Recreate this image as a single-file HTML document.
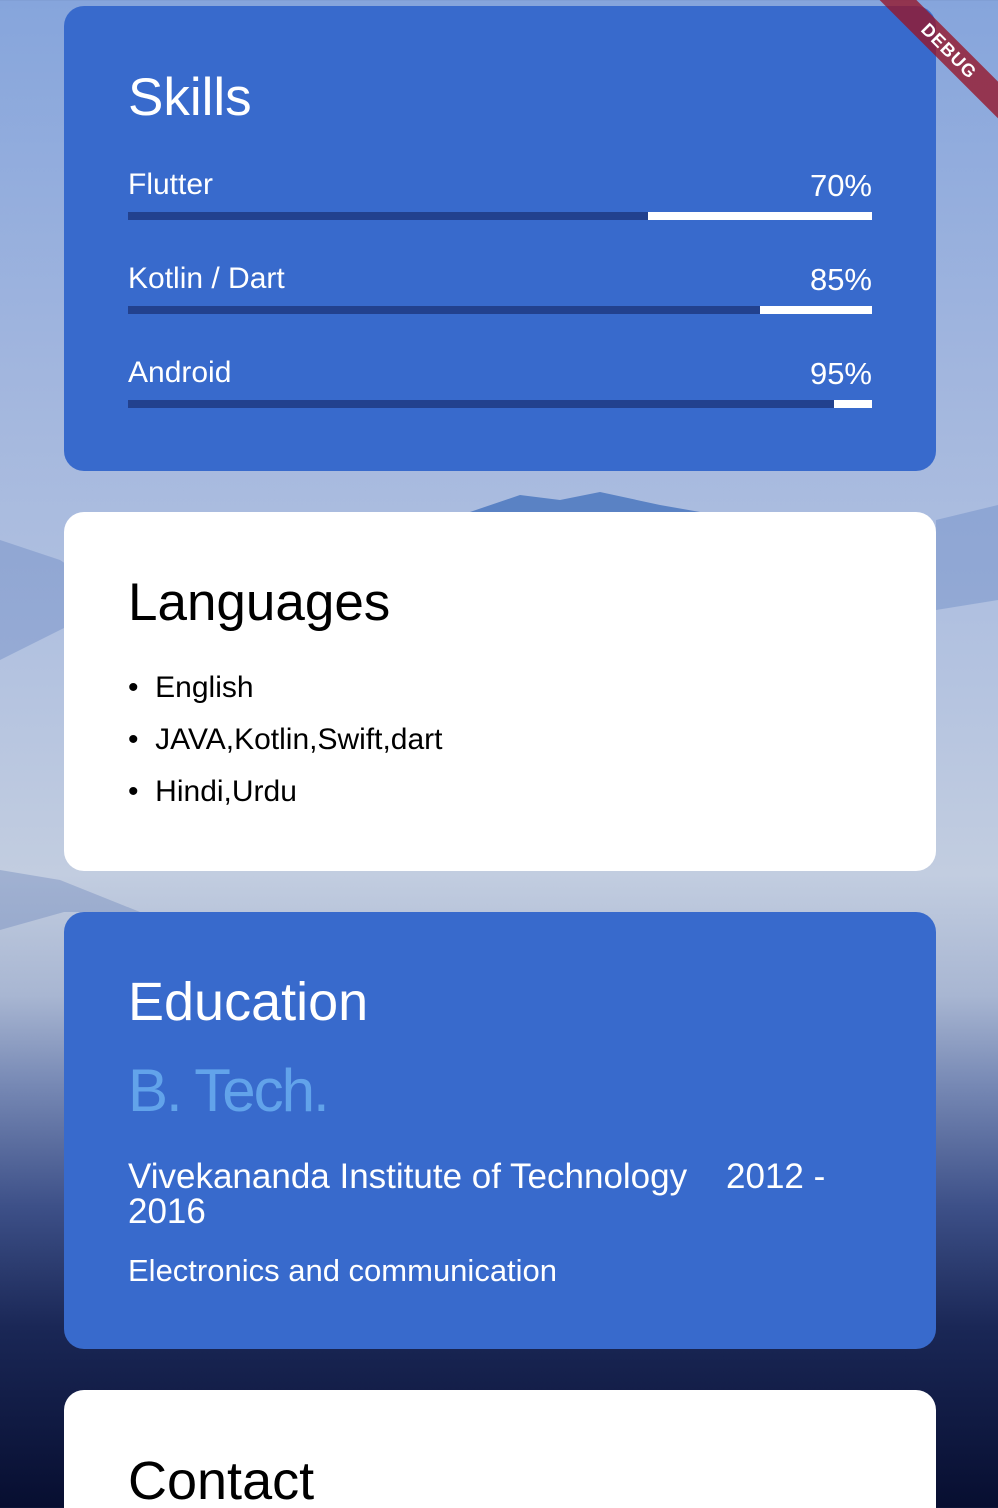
<!DOCTYPE html>
<html><head><meta charset="utf-8"><style>
*{margin:0;padding:0;box-sizing:border-box}
html,body{width:998px;height:1508px;overflow:hidden}
body{font-family:"Liberation Sans",sans-serif;position:relative;
background:linear-gradient(180deg,#86a5dc 0%,#a2b6de 25%,#b4c3e0 45%,#c2cde0 58%,#a8b6d2 66%,#7688b4 72%,#3d5088 80%,#1a2756 88%,#070e30 100%);}
.card{position:absolute;left:64px;width:872px;border-radius:20px}
.blue{background:#386acc;color:#fff}
.white{background:#fff;color:#000}
.abs{position:absolute;white-space:nowrap}
.bar{position:absolute;left:64px;width:744px;height:8px;background:#22418e}
.bar i{position:absolute;right:0;top:0;height:8px;background:#fff}
</style></head><body>
<svg style="position:absolute;left:0;top:0" width="998" height="1508">
<path d="M0 540 L60 560 L120 600 L0 660Z" fill="#5f7fbe" opacity=".35"/>
<path d="M470 512 L520 495 L560 500 L600 492 L660 505 L700 512Z" fill="#5a82c4"/>
<path d="M936 520 L998 505 L998 600 L936 610Z" fill="#5b7fbf" opacity=".35"/>
<path d="M0 870 L60 880 L110 900 L140 912 L64 912 L0 930Z" fill="#6d86bb" opacity=".4"/>
</svg>

<div class="card blue" style="top:6px;height:465px">
 <div class="abs" style="left:64px;top:61px;font-size:53px">Skills</div>
 <div class="abs" style="left:64px;top:162px;font-size:30px">Flutter</div>
 <div class="abs" style="right:64px;top:162px;font-size:31px">70%</div>
 <div class="bar" style="top:206px"><i style="width:224px"></i></div>
 <div class="abs" style="left:64px;top:256px;font-size:30px">Kotlin / Dart</div>
 <div class="abs" style="right:64px;top:256px;font-size:31px">85%</div>
 <div class="bar" style="top:300px"><i style="width:112px"></i></div>
 <div class="abs" style="left:64px;top:350px;font-size:30px">Android</div>
 <div class="abs" style="right:64px;top:350px;font-size:31px">95%</div>
 <div class="bar" style="top:394px"><i style="width:38px"></i></div>
</div>

<div class="card white" style="top:512px;height:359px">
 <div class="abs" style="left:64px;top:60px;font-size:53px">Languages</div>
 <div class="abs" style="left:64px;top:159px;font-size:30px">•&nbsp; English</div>
 <div class="abs" style="left:64px;top:211px;font-size:30px">•&nbsp; JAVA,Kotlin,Swift,dart</div>
 <div class="abs" style="left:64px;top:263px;font-size:30px">•&nbsp; Hindi,Urdu</div>
</div>

<div class="card blue" style="top:912px;height:437px">
 <div class="abs" style="left:64px;top:59px;font-size:54px">Education</div>
 <div class="abs" style="left:64px;top:144px;font-size:60px;color:#62a3ea;letter-spacing:-2px">B. Tech.</div>
 <div class="abs" style="left:64px;top:247px;font-size:35px;line-height:35px;white-space:normal;width:760px">Vivekananda Institute of Technology&nbsp;&nbsp;&nbsp; 2012 - 2016</div>
 <div class="abs" style="left:64px;top:341px;font-size:31px">Electronics and communication</div>
</div>

<div class="card white" style="top:1390px;height:140px">
 <div class="abs" style="left:64px;top:60px;font-size:54px">Contact</div>
</div>

<div style="position:absolute;left:864px;top:38px;width:170px;height:26px;background:rgba(150,20,40,.78);transform:rotate(45deg);transform-origin:center;color:#fff;font-size:18px;font-weight:bold;text-align:center;line-height:26px;letter-spacing:1px">DEBUG</div>
</body></html>
